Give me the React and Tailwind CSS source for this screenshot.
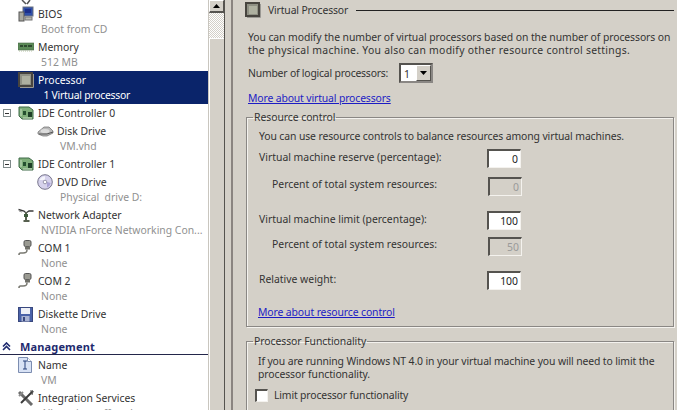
const F = "font-['Noto_Sans','Liberation_Sans',sans-serif]";

const Bios = () => (
  <svg width="16" height="16" viewBox="0 0 16 16"><rect x="5" y="1" width="10" height="9" fill="#2f4fa8" stroke="#6b7280"/><rect x="7" y="3" width="6" height="4" fill="#1c2f8a"/><rect x="1" y="6" width="5" height="9" fill="#a8a8a0" stroke="#555"/><rect x="7" y="11" width="7" height="3" fill="#b8b8b0" stroke="#777"/></svg>
);
const Memory = () => (
  <svg width="16" height="10" viewBox="0 0 16 10"><rect x="0" y="1" width="16" height="7" fill="#5c8a58" stroke="#4a6a48" strokeWidth="0.6"/><path d="M2 3h3v2H2zM6 3h3v2H6zM10 3h4v2h-4z" fill="#2f4a30"/><path d="M1 9h14" stroke="#b7c3a6" strokeDasharray="1 1"/></svg>
);
const Cpu = () => (
  <svg width="16" height="16" viewBox="0 0 16 16"><rect x="0" y="0" width="15" height="15" fill="#47443f"/><rect x="2" y="2" width="11" height="11" fill="#8f9084"/><rect x="4" y="4" width="8" height="8" fill="#aeb0a0"/><path d="M15.500 2v13.500H2" stroke="#9a9893" fill="none"/></svg>
);
const Ide = () => (
  <svg width="16" height="15" viewBox="0 0 16 15"><path d="M1 1h10l4 3v9H4L1 10z" fill="#7fae7a" stroke="#3e6a48"/><rect x="5" y="5" width="3" height="4" fill="#25502f"/><rect x="10" y="6" width="4" height="5" fill="#1f3f28"/><path d="M3 3v7M5 12h9" stroke="#c7dcc0"/></svg>
);
const Disk = () => (
  <svg width="17" height="11" viewBox="0 0 17 11"><path d="M1 6l6-5h5l4 4v2l-6 3H6L1 8z" fill="#b9b9b9" stroke="#6a6a6a" strokeWidth="0.7"/><ellipse cx="8" cy="5" rx="4.500" ry="2" fill="#dcdcdc"/><path d="M2 8h8l6-2" stroke="#555" fill="none"/></svg>
);
const Dvd = () => (
  <svg width="16" height="16" viewBox="0 0 16 16"><circle cx="8" cy="8" r="7.300" fill="#d6d2ec" stroke="#77758c"/><path d="M2.500 6A6 6 0 0 1 8 2.200V6z" fill="#f4f4fb"/><path d="M10 13.500A6 6 0 0 0 13.600 9L10 8z" fill="#aaa3d6"/><circle cx="8" cy="8" r="1.800" fill="#fff" stroke="#77758c" strokeWidth="0.7"/></svg>
);
const Net = () => (
  <svg width="16" height="14" viewBox="0 0 16 14"><path d="M0.500 1.500L6 3l2 2 3-2h4.500" stroke="#3b3b3b" strokeWidth="1.300" fill="none"/><path d="M8 4v8M5.500 13h6" stroke="#57604f" strokeWidth="2"/><path d="M6 6h4v3H6z" fill="#3e5b3d"/><path d="M1 3l3 1" stroke="#9b9b9b"/></svg>
);
const Com = () => (
  <svg width="14" height="16" viewBox="0 0 14 16"><rect x="6" y="0.500" width="7" height="6" rx="1.500" fill="#9a9a92" stroke="#555"/><rect x="7" y="6.500" width="5" height="3" fill="#71716a"/><path d="M9 9.500c0 3-1 3.500-4 3.500H2.500c-1 0-1.500.5-1.500 2" stroke="#7a7a72" strokeWidth="1.600" fill="none"/></svg>
);
const Floppy = () => (
  <svg width="15" height="15" viewBox="0 0 15 15"><rect x="0.500" y="0.500" width="14" height="14" fill="#4a62a8" stroke="#39487e"/><rect x="3" y="1" width="9" height="6" fill="#eef0f6"/><rect x="3.500" y="9" width="8" height="5.500" fill="#a9b3d2"/><rect x="5" y="10" width="2" height="4" fill="#39487e"/></svg>
);
const Doc = () => (
  <svg width="14" height="16" viewBox="0 0 14 16"><path d="M0.500 0.500h9l4 4v11h-13z" fill="#d8e2f5" stroke="#7c8db0"/><path d="M9.500 0.500v4h4" fill="#fff" stroke="#7c8db0"/><path d="M5 4h4M5 12h4M7 4v8" stroke="#27407a" strokeWidth="1"/></svg>
);
const Tools = () => (
  <svg width="16" height="16" viewBox="0 0 16 16"><path d="M1 2l13 13" stroke="#6b6b6b" strokeWidth="3"/><path d="M15 1L3 13" stroke="#3a3a3a" strokeWidth="2"/><path d="M1 6l4-4" stroke="#8a8a8a" strokeWidth="2"/><path d="M12 1l3 0-1 4" stroke="#555" fill="none"/></svg>
);

const Row = ({ icon, title, sub, indent, selected, toggle }) => (
  <div className={"flex shrink-0 flex-col " + (selected ? "bg-[#0a246a] text-white" : "text-[#333]")}>
    <div className={"flex h-[18px] items-center " + (indent ? "pl-[37px]" : toggle ? "pl-[3px]" : "pl-[18px]")}>
      {toggle && (
        <span className="mr-[7px] flex h-[8px] w-[8px] items-center justify-center border border-[#7f8a8a] bg-white">
          <span className="h-px w-[4px] bg-[#333]" />
        </span>
      )}
      <span className="flex h-[16px] w-[20px] items-center">{icon}</span>
      <span className="whitespace-nowrap">{title}</span>
    </div>
    {sub && (
      <div className={"h-[15px] whitespace-pre leading-[13px] " + (indent ? "pl-[60px] " : "pl-[41px] ") + (selected ? "tracking-[-0.25px] text-white" : "text-[#909090]")}>
        {sub}
      </div>
    )}
  </div>
);

const Field = ({ value, disabled }) => (
  <div
    className={
      "flex h-[19px] w-[34px] items-center justify-end border-t-2 border-l-2 border-t-[#55534f] border-l-[#55534f] border-r border-b border-r-[#f4f2ee] border-b-[#f4f2ee] pr-[2px] " +
      (disabled ? "-mr-px bg-[#d4d0c8] text-[#9a9a9a]" : "bg-white text-[#222]")
    }
  >
    {value}
  </div>
);

const FormRow = ({ label, indent, value, disabled, className = "" }) => (
  <div className={"flex items-center justify-between pr-[152px] " + (indent ? "pl-[25px] " : "pl-[12px] ") + className}>
    <span className={indent ? "mb-[5px]" : "mb-[3px]"}>{label}</span>
    <Field value={value} disabled={disabled} />
  </div>
);

const Group = ({ legend, className = "", children }) => (
  <fieldset className={"min-w-0 border border-[#8a8784] shadow-[inset_1px_1px_0_#f4f2ee,1px_1px_0_#f4f2ee] " + className}>
    <legend className="ml-[6px] h-[13px] px-px leading-[13px] tracking-[-0.05px] text-[#333]">{legend}</legend>
    {children}
  </fieldset>
);

export default function App() {
  return (
    <div className={"flex h-[410px] w-[677px] overflow-hidden bg-[#d4d0c8] text-[10.4px] leading-[13px] text-[#333] " + F}>
      <aside className="flex h-full w-[209px] shrink-0 flex-col overflow-hidden border-r border-[#c9c6bf] bg-white">
        <div className="h-[5px] shrink-0 overflow-hidden pl-[21px]">
          <svg width="12" height="5" viewBox="0 0 12 5"><path d="M1 0l4 4M9 0L6 4" stroke="#555" strokeWidth="1.500"/></svg>
        </div>
        <Row icon={<Bios />} title="BIOS" sub="Boot from CD" />
        <Row icon={<Memory />} title="Memory" sub="512 MB" />
        <Row icon={<Cpu />} title="Processor" sub=" 1 Virtual processor" selected />
        <Row toggle icon={<Ide />} title="IDE Controller 0" />
        <Row indent icon={<Disk />} title="Disk Drive" sub="VM.vhd" />
        <Row toggle icon={<Ide />} title="IDE Controller 1" />
        <Row indent icon={<Dvd />} title="DVD Drive" sub="Physical  drive D:" />
        <Row icon={<Net />} title="Network Adapter" sub="NVIDIA nForce Networking Con..." />
        <Row icon={<Com />} title="COM 1" sub="None" />
        <Row icon={<Com />} title="COM 2" sub="None" />
        <Row icon={<Floppy />} title="Diskette Drive" sub="None" />
        <div className="mb-px flex h-[17px] shrink-0 items-center border-b border-[#23264a] pl-[2px] text-[11px] font-bold tracking-[0.15px] text-[#1e2a6e]">
          <svg className="mr-[9px]" width="9" height="9" viewBox="0 0 9 9"><path d="M1 4.500l3.500-3.500L8 4.500M1 8l3.500-3.500L8 8" stroke="#1e2a6e" strokeWidth="1.600" fill="none"/></svg>
          Management
        </div>
        <Row icon={<Doc />} title="Name" sub="VM" />
        <Row icon={<Tools />} title="Integration Services" sub="All services offered" />
      </aside>

      <div className="flex h-full w-[16px] shrink-0 flex-col border-r border-[#55534f]">
        <div className="flex h-[13px] items-center justify-center border-t border-l border-white border-b-2 border-r border-b-[#55534f] border-r-[#55534f] bg-[#d4d0c8]">
          <svg width="7" height="4" viewBox="0 0 7 4"><path d="M3.500 0L7 4H0z" fill="#000"/></svg>
        </div>
        <div className="h-[25px] bg-[repeating-conic-gradient(#fff_0_25%,#d4d0c8_0_50%)] bg-[length:2px_2px]" />
        <div className="flex-1 border-t border-l border-white bg-[#d4d0c8]" />
      </div>

      <div className="w-[6px] shrink-0" />

      <main className="h-full flex-1 overflow-hidden border-l-2 border-[#8a8480] pl-[13px] pr-[3px]">
        <div className="-ml-px flex h-[14px] items-center pt-[6px]">
          <span className="flex w-[23px] shrink-0"><Cpu /></span>
          <span className="whitespace-nowrap tracking-[-0.15px]">Virtual Processor</span>
          <span className="ml-[8px] h-px flex-1 bg-[#222]" />
        </div>
        <p className="ml-[2px] mt-[17px] whitespace-nowrap">
          <span className="tracking-[-0.08px]">You can modify the number of virtual processors based on the number of processors on</span><br />
          <span className="tracking-[0.28px]">the physical machine. You also can modify other resource control settings.</span>
        </p>
        <div className="ml-[2px] mt-[6px] flex h-[20px] items-center">
          <span className="w-[151px] whitespace-nowrap tracking-[-0.2px]">Number of logical processors:</span>
          <div className="flex h-[20px] w-[34px] border-2 border-t-[#55534f] border-l-[#55534f] border-r-[#8a8784] border-b-[#8a8784] bg-white pl-[3px]">
            <span className="flex-1 leading-[18px]">1</span>
            <span className="flex h-[16px] w-[15px] items-center justify-center border-t border-l border-white border-r border-b border-r-[#55534f] border-b-[#55534f] bg-[#d4d0c8]">
              <svg width="7" height="4" viewBox="0 0 7 4"><path d="M0 0h7L3.500 4z" fill="#000"/></svg>
            </span>
          </div>
        </div>
        <a className="ml-[2px] mt-[9px] block tracking-[-0.13px] text-[#1c1cc4] underline">More about virtual processors</a>

        <Group legend="Resource control" className="mt-[6px] h-[216px]">
          <p className="ml-[12px] mt-[6px] whitespace-nowrap tracking-[-0.1px]">You can use resource controls to balance resources among virtual machines.</p>
          <FormRow className="mt-[6px]" label="Virtual machine reserve (percentage):" value="0" />
          <FormRow className="mt-[9px]" indent label="Percent of total system resources:" value="0" disabled />
          <FormRow className="mt-[15px]" label="Virtual machine limit (percentage):" value="100" />
          <FormRow className="mt-[7px]" indent label="Percent of total system resources:" value="50" disabled />
          <FormRow className="mt-[15px]" label="Relative weight:" value="100" />
          <a className="ml-[11px] mt-[16px] block tracking-[-0.1px] text-[#1c1cc4] underline">More about resource control</a>
        </Group>

        <Group legend="Processor Functionality" className="mt-[8px] h-[90px]">
          <p className="ml-[11px] mt-[7px] whitespace-nowrap">
            <span className="tracking-[-0.12px]">If you are running Windows NT 4.0 in your virtual machine you will need to limit the</span><br />
            <span className="tracking-[-0.08px]">processor functionality.</span>
          </p>
          <div className="ml-[8px] mt-[8px] flex items-center tracking-[-0.15px]">
            <span className="mr-[6px] h-[13px] w-[13px] border-t-2 border-l-2 border-t-[#55534f] border-l-[#55534f] border-r border-b border-r-[#f4f2ee] border-b-[#f4f2ee] bg-white" />
            Limit processor functionality
          </div>
        </Group>
      </main>
    </div>
  );
}
